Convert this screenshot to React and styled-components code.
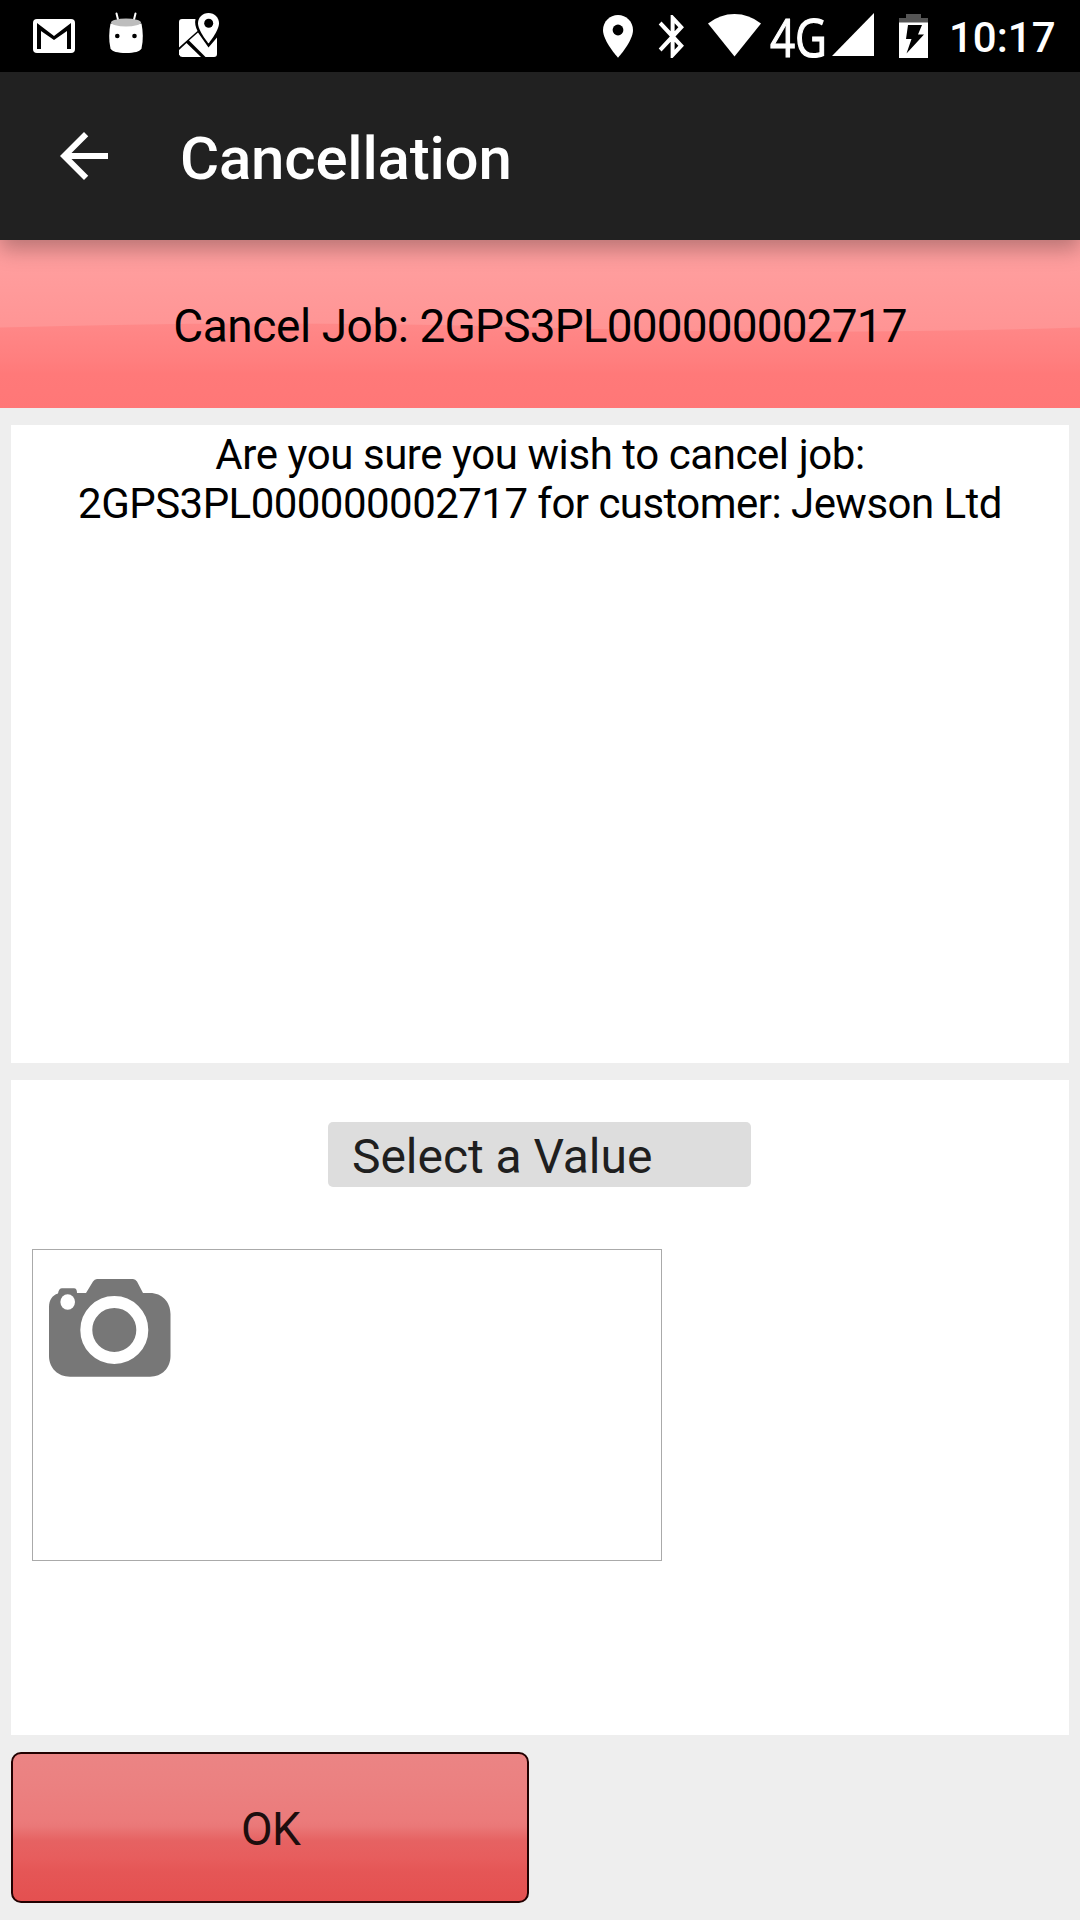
import React from "react";
import styled, {createGlobalStyle} from "styled-components";

const GlobalStyle = createGlobalStyle`
  body {
    margin: 0;
    background: #eeeeee;
    font-family: Roboto, sans-serif;
  }
  * {
    box-sizing: border-box;
  }
`;

const Screen = styled.div`
  display: flex;
  flex-direction: column;
  width: 1080px;
  height: 1920px;
  background: #eeeeee;
  overflow: hidden;
`;

const StatusBar = styled.div`
  display: flex;
  justify-content: space-between;
  height: 72px;
  padding: 0 25px 0 33px;
  background: #000000;
`;

const StatusGroup = styled.div`
  display: flex;
  align-items: flex-start;
`;

const StatusIcon = styled.svg`
  display: block;
  flex: none;
  overflow: visible;
  margin-top: ${(p) => p.$top}px;
  margin-right: ${(p) => p.$gap}px;
`;

const Clock = styled.span`
  width: 106px;
  padding-top: 13px;
  font-size: 42px;
  font-weight: 500;
  line-height: 49px;
  color: #ffffff;
  white-space: nowrap;
`;

const AppBar = styled.header`
  position: relative;
  z-index: 1;
  display: flex;
  align-items: center;
  height: 168px;
  padding-left: 60px;
  background: #212121;
  box-shadow: 0 9px 20px 0 rgba(0, 0, 0, 0.28);
`;

const BackIcon = styled.svg`
  margin-right: 72px;
`;

const Title = styled.h1`
  margin: 6px 0 0;
  font-size: 60px;
  font-weight: 500;
  line-height: 70px;
  letter-spacing: -0.2px;
  color: #ffffff;
`;

const JobBanner = styled.div`
  position: relative;
  display: flex;
  align-items: center;
  justify-content: center;
  height: 168px;
  font-size: 46px;
  color: #000000;
`;

const BannerGloss = styled.svg`
  position: absolute;
  left: 0;
  top: 0;
`;

const BannerText = styled.span`
  z-index: 0;
  padding-top: 4px;
  white-space: nowrap;
`;

const Tracked = styled.span`
  letter-spacing: ${(p) => p.$spacing}px;
`;

const Card = styled.section`
  display: flex;
  flex-direction: column;
  flex: none;
  height: ${(p) => p.$height}px;
  margin: 17px 11px 0;
  background: #ffffff;
`;

const Message = styled.p`
  margin: 0;
  padding-top: 5px;
  font-size: 42px;
  line-height: 49px;
  text-align: center;
  color: #000000;
`;

const Select = styled.div`
  width: 423px;
  height: 65px;
  margin: 42px 0 0 317px;
  padding-left: 24px;
  border-radius: 5px;
  background: #dddddd;
  font-size: 48px;
  line-height: 70px;
  letter-spacing: -0.05px;
  color: #1f1f1f;
`;

const PhotoBox = styled.div`
  width: 630px;
  height: 312px;
  margin: 62px 0 0 21px;
  padding: 29px 0 0 16px;
  border: 1px solid #aaaaaa;
`;

const OkButton = styled.button`
  width: 518px;
  height: 151px;
  margin: 17px 0 0 11px;
  padding: 2px 0 0 1px;
  border: 2px solid #220000;
  border-radius: 10px;
  background: linear-gradient(
    #eb8484 0%,
    #eb8181 20%,
    #eb7b7b 45%,
    #ea7878 49%,
    #e66262 59%,
    #e75d5d 71%,
    #e55656 80%,
    #e45050 100%
  );
  font-family: inherit;
  font-size: 46px;
  letter-spacing: -0.7px;
  color: #1d0e0e;
`;

const GmailIcon = () => (
    <StatusIcon $top={19} $gap={34} width="42" height="34" viewBox="0 0 42 34">
        <rect width="42" height="34" rx="4" fill="#fff"/>
        <path d="M4 30V4l17 13L38 4v26h-4V12L21 21 8 12v18z" fill="#000"/>
    </StatusIcon>
);

const AndroidIcon = () => (
    <StatusIcon $top={12} $gap={36} width="34" height="41" viewBox="0 0 34 41">
        <path d="M7.500 1.500l2 8M26.500 1.500l-2 8" stroke="#fff" strokeWidth="2" strokeLinecap="round"/>
        <path d="M1.500 11.500h31c1.500 8 2 16 0 25-1.500 3-7 4.500-15.500 4.500S3 39.500 1.500 36.500c-2-9-1.500-17 0-25z" fill="#fff"/>
        <ellipse cx="17" cy="10.500" rx="15" ry="4" fill="#bdbdbd"/>
        <circle cx="8.300" cy="24" r="2.300" fill="#000"/>
        <circle cx="25.500" cy="24" r="2.300" fill="#000"/>
    </StatusIcon>
);

const MapIcon = () => (
    <StatusIcon $top={13} $gap={0} width="40" height="44" viewBox="0 0 40 44">
        <path d="M3 6h13.500c-1 4 0 8 2 12L0 34.500V9q0-3 3-3z" fill="#fff"/>
        <path d="M7.500 30L22 44H3.500Q1 44 0 41.500V37z" fill="#fff"/>
        <path d="M10 27.500l9-8 10.500 15L38 24.500V41q0 3-3 3h-8.500z" fill="#fff"/>
        <path d="M29.500 0C23.500 0 19 4.500 19 10.300c0 7.500 10.500 20.200 10.500 20.200S40 17.800 40 10.300C40 4.500 35.500 0 29.500 0z" fill="#fff"/>
        <circle cx="29.700" cy="10.300" r="4.500" fill="#000"/>
    </StatusIcon>
);

const LocationIcon = () => (
    <StatusIcon $top={15} $gap={26} width="30" height="43" viewBox="0 0 30 43">
        <path d="M15 0C6.700 0 0 6.700 0 15c0 11.300 15 27.700 15 27.700S30 26.300 30 15C30 6.700 23.300 0 15 0z" fill="#fff"/>
        <circle cx="15" cy="15" r="5.400" fill="#000"/>
    </StatusIcon>
);

const BluetoothIcon = () => (
    <StatusIcon $top={15} $gap={23} width="26" height="43" viewBox="5 2 14 20" preserveAspectRatio="none">
        <path
            d="M17.710 7.710L12 2h-1v7.590L6.410 5 5 6.410 10.590 12 5 17.590 6.410 19 11 14.410V22h1l5.710-5.710-4.300-4.290 4.300-4.290zM13 5.830l1.880 1.880L13 9.590V5.830zm1.880 10.460L13 18.170v-3.760l1.880 1.880z"
            transform="translate(-.5) scale(1.070 1)"
            fill="#fff"
        />
    </StatusIcon>
);

const WifiIcon = () => (
    <StatusIcon $top={14} $gap={8} width="53" height="43" viewBox="0 0 53 43">
        <path d="M0 9.500Q12 0 26.500 0T53 9.500L26.500 42.500z" fill="#fff"/>
    </StatusIcon>
);

const NetworkType = () => (
    <StatusIcon $top={0} $gap={4} width="59" height="72" viewBox="0 0 59 72">
        <text
            x="1"
            y="57"
            fontSize="53"
            fontFamily="Open Sans"
            textLength="57"
            lengthAdjust="spacingAndGlyphs"
            fill="#fff"
            stroke="#fff"
            strokeWidth="1.200"
        >
            4G
        </text>
    </StatusIcon>
);

const SignalIcon = () => (
    <StatusIcon $top={13} $gap={25} width="42" height="43" viewBox="0 0 42 43">
        <path d="M42 0v43H0z" fill="#fff"/>
    </StatusIcon>
);

const BatteryIcon = () => (
    <StatusIcon $top={14} $gap={21} width="29" height="44" viewBox="0 0 29 44">
        <path d="M7 0h15v4h7v5H0V4h7z" fill="#555"/>
        <path d="M0 8.500h29V44H0z" fill="#fff"/>
        <path d="M9 11h14l-4 9.500h6L7.500 39.500 12.500 25H7z" fill="#000"/>
    </StatusIcon>
);

const CameraIcon = () => (
    <svg width="122" height="98" viewBox="0 0 122 98">
        <path
            d="M0 28C0 21 3 16.500 9 14.500 9.500 11 11 9.300 13 9.300h12c2 0 3 1.700 3 4.700h9l7-11.500Q45.500 0 48 0h36q2.500 0 4 2.500L94 14h7c12 0 20.500 9 20.500 21v42c0 12-8.500 20.700-20.500 20.700H21C9 97.700 0 89 0 77z"
            fill="#777777"
        />
        <ellipse cx="18.700" cy="23" rx="7.300" ry="7.800" fill="#fff"/>
        <circle cx="65.300" cy="51" r="28" fill="none" stroke="#fff" strokeWidth="12"/>
    </svg>
);

const App = () => {
    return (
        <Screen>
            <GlobalStyle/>
            <StatusBar>
                <StatusGroup>
                    <GmailIcon/>
                    <AndroidIcon/>
                    <MapIcon/>
                </StatusGroup>
                <StatusGroup>
                    <LocationIcon/>
                    <BluetoothIcon/>
                    <WifiIcon/>
                    <NetworkType/>
                    <SignalIcon/>
                    <BatteryIcon/>
                    <Clock>10:17</Clock>
                </StatusGroup>
            </StatusBar>

            <AppBar>
                <BackIcon width="48" height="48" viewBox="4 4 16 16">
                    <path d="M20 11H7.830l5.590-5.590L12 4l-8 8 8 8 1.410-1.410L7.830 13H20v-2z" fill="#fff"/>
                </BackIcon>
                <Title>Cancellation</Title>
            </AppBar>

            <JobBanner>
                {/* glossy two-tone fill, split by a shallow wave */}
                <BannerGloss width="1080" height="168" viewBox="0 0 1080 168">
                    <defs>
                        <linearGradient id="bannerBase" x1="0" y1="0" x2="0" y2="1">
                            <stop offset="0.5" stopColor="#ff8888"/>
                            <stop offset="0.72" stopColor="#ff7e7e"/>
                            <stop offset="0.8" stopColor="#ff7979"/>
                            <stop offset="1" stopColor="#ff7777"/>
                        </linearGradient>
                        <linearGradient id="bannerTop" x1="0" y1="0" x2="0" y2="1">
                            <stop offset="0" stopColor="#ffa0a0"/>
                            <stop offset="0.4" stopColor="#ff9c9c"/>
                            <stop offset="1" stopColor="#ff9494"/>
                        </linearGradient>
                    </defs>
                    <rect width="1080" height="168" fill="url(#bannerBase)"/>
                    <path d="M0 0h1080v87.500C900 93 720 93 540 87.500S180 82 0 87.500z" fill="url(#bannerTop)"/>
                </BannerGloss>
                <BannerText>
                    <Tracked $spacing={-0.43}>Cancel Job: </Tracked>
                    <Tracked $spacing={-0.85}>2GPS3PL000000002717</Tracked>
                </BannerText>
            </JobBanner>

            <Card $height={638}>
                <Message>
                    <Tracked $spacing={-0.43}>Are you sure you wish to cancel job:</Tracked>
                    <br/>
                    <Tracked $spacing={-0.54}>2GPS3PL000000002717 for customer: Jewson Ltd</Tracked>
                </Message>
            </Card>

            <Card $height={655}>
                <Select>Select a Value</Select>
                <PhotoBox>
                    <CameraIcon/>
                </PhotoBox>
            </Card>

            <OkButton>OK</OkButton>
        </Screen>
    );
}

export default App;
